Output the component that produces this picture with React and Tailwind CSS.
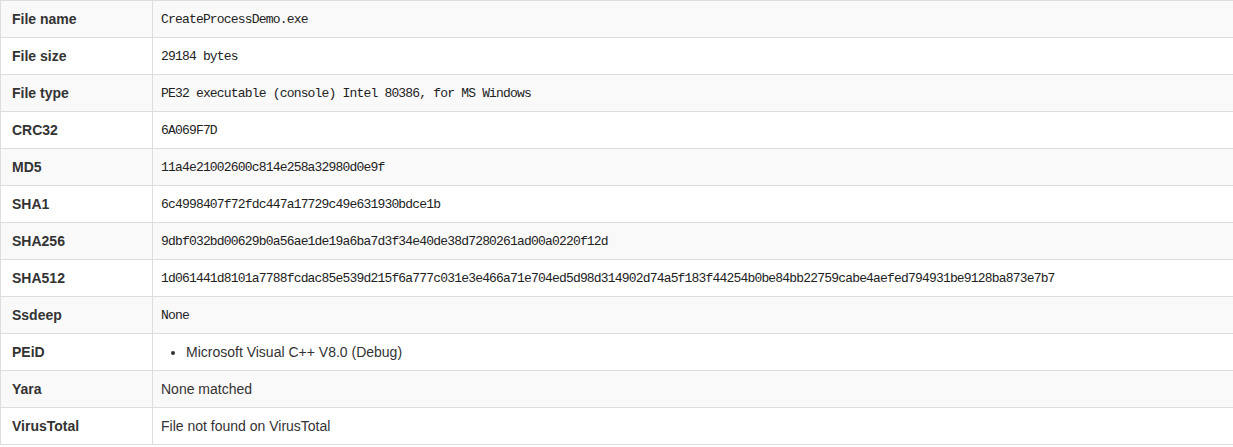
import React from "react"

const rows = [
  { label: "File name", value: "CreateProcessDemo.exe", mono: true },
  { label: "File size", value: "29184 bytes", mono: true },
  { label: "File type", value: "PE32 executable (console) Intel 80386, for MS Windows", mono: true },
  { label: "CRC32", value: "6A069F7D", mono: true },
  { label: "MD5", value: "11a4e21002600c814e258a32980d0e9f", mono: true },
  { label: "SHA1", value: "6c4998407f72fdc447a17729c49e631930bdce1b", mono: true },
  { label: "SHA256", value: "9dbf032bd00629b0a56ae1de19a6ba7d3f34e40de38d7280261ad00a0220f12d", mono: true },
  {
    label: "SHA512",
    value:
      "1d061441d8101a7788fcdac85e539d215f6a777c031e3e466a71e704ed5d98d314902d74a5f183f44254b0be84bb22759cabe4aefed794931be9128ba873e7b7",
    mono: true,
  },
  { label: "Ssdeep", value: "None", mono: true },
  { label: "PEiD", list: ["Microsoft Visual C++ V8.0 (Debug)"] },
  { label: "Yara", value: "None matched" },
  { label: "VirusTotal", value: "File not found on VirusTotal" },
]

export default function App() {
  return (
    <div className="w-[1240px] bg-white text-[#333] text-[14px]" style={{ fontFamily: '"Liberation Sans", Arial, sans-serif' }}>
      <div className="border-t border-l border-[#ddd]">
        {rows.map((row, i) => (
          <div key={row.label} className={`flex h-[37px] border-b border-[#ddd] ${i % 2 === 0 ? "bg-[#f9f9f9]" : "bg-white"}`}>
            <div className="w-[152px] shrink-0 border-r border-[#ddd] pl-[11px] flex items-center font-bold leading-5">
              {row.label}
            </div>
            <div className="flex-1 pl-2 flex items-center leading-5">
              {row.list ? (
                <ul className="list-disc pl-[25px] m-0">
                  {row.list.map((item) => (
                    <li key={item}>{item}</li>
                  ))}
                </ul>
              ) : row.mono ? (
                <span
                  className="text-[13px] tracking-[-0.82px] text-[#222] leading-5 pt-[2px]"
                  style={{ fontFamily: '"Liberation Mono", "Courier New", monospace' }}
                >
                  {row.value}
                </span>
              ) : (
                row.value
              )}
            </div>
          </div>
        ))}
      </div>
    </div>
  )
}
